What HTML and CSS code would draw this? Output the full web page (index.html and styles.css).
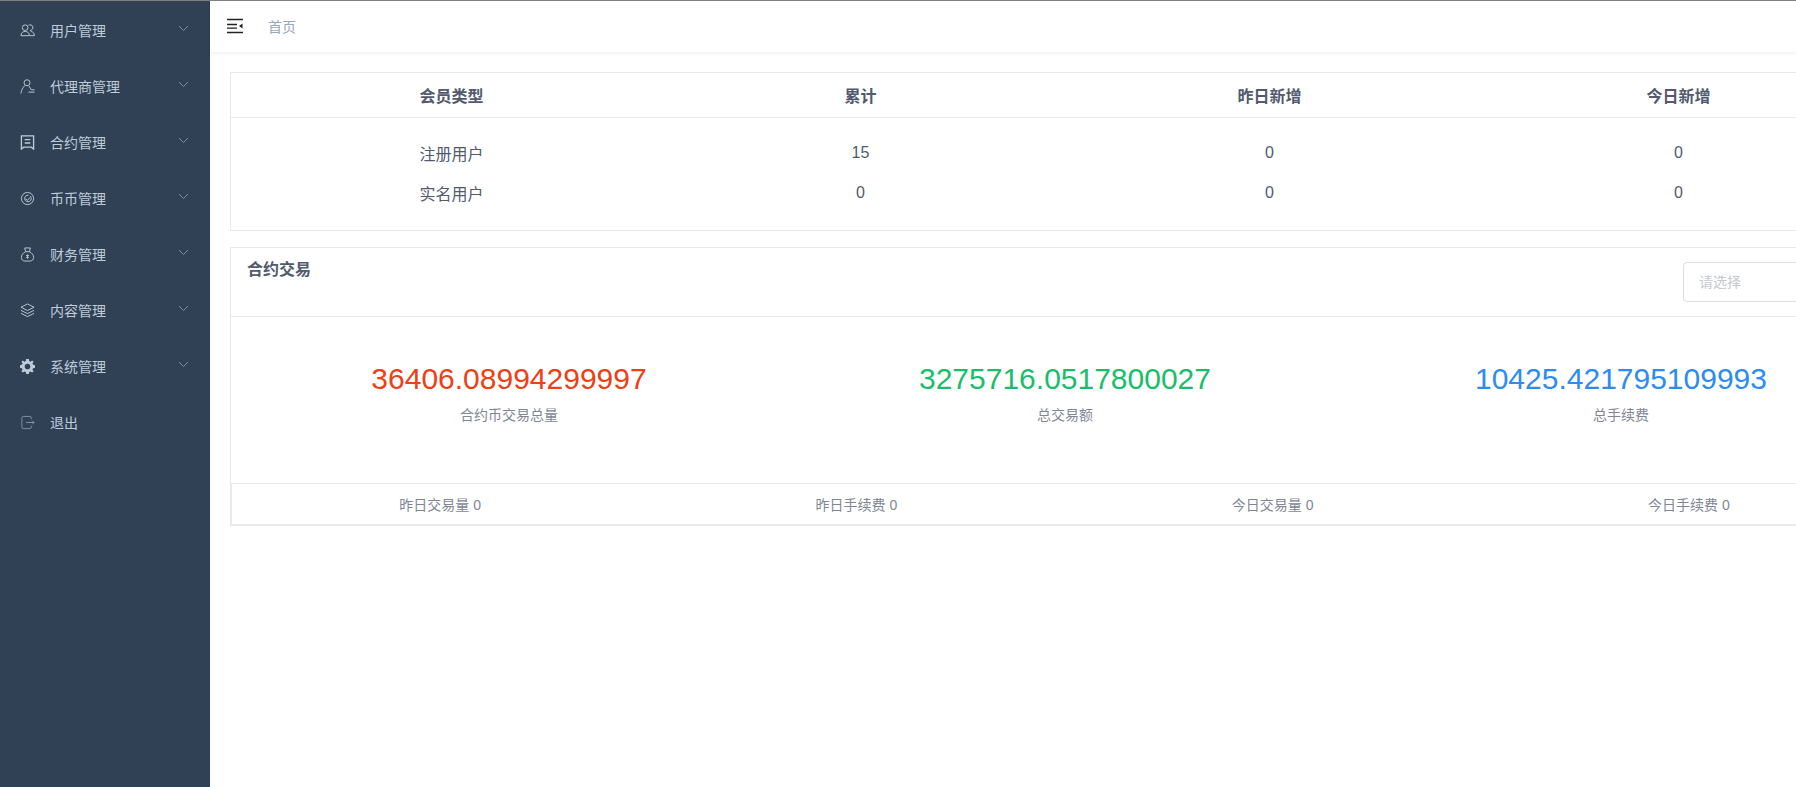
FILE: index.html
```html
<!DOCTYPE html>
<html lang="zh-CN">
<head>
    <meta charset="UTF-8">
    <meta name="viewport" content="width=device-width, initial-scale=1.0">
    <title>首页</title>
    <link rel="stylesheet" href="styles.css">
</head>
<body>
    <div class="app">
        <!-- Sidebar -->
        <aside class="sidebar">
            <ul class="menu">
                <li class="menu-item">
                    <svg class="menu-icon" viewBox="0 0 16 16"><circle cx="5.500" cy="5" r="3"/><path d="M1 13.500c0-3 2-4.500 4.500-4.500S10 10.500 10 13.500z"/><path d="M9 2.500a3 3 0 1 1 1.500 5.400M11.500 9c2.300.3 3.800 1.800 3.800 4.500H10"/></svg>
                    <span>用户管理</span>
                    <svg class="menu-arrow" viewBox="0 0 11 7"><path d="M1 1l4.500 4.500L10 1"/></svg>
                </li>
                <li class="menu-item">
                    <svg class="menu-icon" viewBox="0 0 16 16"><circle cx="7.500" cy="4" r="3.200"/><path d="M1 15.500c.4-3.500 1.800-6 4-8.500M9.500 7.500l2.500 4H15.500M9 14h6.500"/></svg>
                    <span>代理商管理</span>
                    <svg class="menu-arrow" viewBox="0 0 11 7"><path d="M1 1l4.500 4.500L10 1"/></svg>
                </li>
                <li class="menu-item">
                    <svg class="menu-icon menu-icon-bold" viewBox="0 0 16 16"><path d="M1.500 1h13v14L12 13H4l-2.500 2zM5 5h6M5 8.500h6"/></svg>
                    <span>合约管理</span>
                    <svg class="menu-arrow" viewBox="0 0 11 7"><path d="M1 1l4.500 4.500L10 1"/></svg>
                </li>
                <li class="menu-item">
                    <svg class="menu-icon" viewBox="0 0 16 16"><circle cx="8" cy="8" r="6.500"/><path d="M11 5.500a3.500 3.500 0 1 1-2-1M6 8.500l2 1.500 2.500-3"/></svg>
                    <span>币币管理</span>
                    <svg class="menu-arrow" viewBox="0 0 11 7"><path d="M1 1l4.500 4.500L10 1"/></svg>
                </li>
                <li class="menu-item">
                    <svg class="menu-icon" viewBox="0 0 16 16"><path d="M5 1h6L10 5H6zM6 5C3 6.500 1.500 8.500 1.500 11c0 2.500 1.500 4 4 4h5c2.500 0 4-1.500 4-4 0-2.500-1.500-4.500-4.500-6"/><path d="M8 8v4.500M6.500 9h3M6.500 11h3"/></svg>
                    <span>财务管理</span>
                    <svg class="menu-arrow" viewBox="0 0 11 7"><path d="M1 1l4.500 4.500L10 1"/></svg>
                </li>
                <li class="menu-item">
                    <svg class="menu-icon" viewBox="0 0 16 16"><path d="M8 1l7 3.500L8 8 1 4.500zM1 7.800l7 3.500 7-3.500M1 11l7 3.500 7-3.500"/></svg>
                    <span>内容管理</span>
                    <svg class="menu-arrow" viewBox="0 0 11 7"><path d="M1 1l4.500 4.500L10 1"/></svg>
                </li>
                <li class="menu-item">
                    <svg class="menu-icon menu-icon-solid" viewBox="0 0 16 16"><path fill-rule="evenodd" d="M6.600 0h2.800l.4 2.200 1.300.6L13 1.500l1.500 1.500-1.300 1.900.9 1.300 1.900.4v2.800l-1.900.4-.9 1.300 1.300 1.900L13 14.500l-1.900-1.300-1.300.6-.4 2.200H6.600l-.4-2.200-1.300-.6L3 14.500 1.500 13l1.300-1.900-.9-1.300L0 9.400V6.600l1.900-.4.900-1.300L1.500 3 3 1.500l1.900 1.300 1.300-.6zM8 5a3 3 0 1 0 0 6 3 3 0 0 0 0-6z"/></svg>
                    <span>系统管理</span>
                    <svg class="menu-arrow" viewBox="0 0 11 7"><path d="M1 1l4.500 4.500L10 1"/></svg>
                </li>
                <li class="menu-item">
                    <svg class="menu-icon menu-icon-dim" viewBox="0 0 16 16"><path d="M12 4.500V3a1.500 1.500 0 0 0-1.500-1.500h-7A1.500 1.500 0 0 0 2 3v10a1.500 1.500 0 0 0 1.500 1.500h7A1.500 1.500 0 0 0 12 13v-1.500M6.500 8H15M13 6l2 2-2 2"/></svg>
                    <span>退出</span>
                </li>
            </ul>
        </aside>

        <!-- Main Content -->
        <main class="main">
            <header class="navbar">
                <svg class="hamburger" viewBox="0 0 16 16"><path d="M0 .8h16v1.400H0zM0 5.800h10v1.400H0zM0 9.400h10v1.400H0zM0 13.800h16v1.400H0zM15.500 5.500v5l-3.500-2.500z"/></svg>
                <span class="breadcrumb">首页</span>
            </header>

            <div class="content">
                <!-- Member table -->
                <section class="card">
                    <div class="table-row table-head">
                        <div>会员类型</div>
                        <div>累计</div>
                        <div>昨日新增</div>
                        <div>今日新增</div>
                    </div>
                    <div class="table-body">
                        <div class="table-row">
                            <div>注册用户</div>
                            <div>15</div>
                            <div>0</div>
                            <div>0</div>
                        </div>
                        <div class="table-row">
                            <div>实名用户</div>
                            <div>0</div>
                            <div>0</div>
                            <div>0</div>
                        </div>
                    </div>
                </section>

                <!-- Contract trades -->
                <section class="card trade-card">
                    <div class="trade-header">
                        <h2>合约交易</h2>
                        <div class="select-box">请选择</div>
                    </div>
                    <div class="trade-stats">
                        <div class="stat">
                            <div class="stat-value red">36406.08994299997</div>
                            <div class="stat-label">合约币交易总量</div>
                        </div>
                        <div class="stat">
                            <div class="stat-value green">3275716.0517800027</div>
                            <div class="stat-label">总交易额</div>
                        </div>
                        <div class="stat">
                            <div class="stat-value blue">10425.421795109993</div>
                            <div class="stat-label">总手续费</div>
                        </div>
                    </div>
                    <div class="trade-footer">
                        <div>昨日交易量 0</div>
                        <div>昨日手续费 0</div>
                        <div>今日交易量 0</div>
                        <div>今日手续费 0</div>
                    </div>
                </section>
            </div>
        </main>
    </div>
</body>
</html>
```

FILE: styles.css
```css
/* Global Styles */
html, body {
    margin: 0;
    height: 100%;
    overflow: hidden;
}

body {
    font-family: 'Liberation Sans', 'Noto Sans CJK SC', sans-serif;
    font-size: 14px;
    color: #515a6e;
    background-color: #ffffff;
    border-top: 1px solid #808080;
    box-sizing: border-box;
}

.app {
    display: flex;
    height: 100%;
}

/* Sidebar */
.sidebar {
    flex: 0 0 210px;
    background-color: #304156;
}

.menu {
    list-style: none;
    margin: 0;
    padding: 1px 0 0;
}

.menu-item {
    display: flex;
    align-items: center;
    height: 56px;
    padding: 0 20px;
    color: #bfcbd9;
}

.menu-icon {
    flex: none;
    width: 15px;
    height: 15px;
    margin-right: 15px;
    fill: none;
    stroke: #bfcbd9;
    stroke-width: 1;
}

.menu-icon-bold {
    stroke-width: 1.4;
}

.menu-icon-solid {
    fill: #bfcbd9;
    stroke: none;
}

.menu-icon-dim {
    stroke: #8493a6;
}

.menu-item span {
    flex: 1;
}

.menu-arrow {
    width: 11px;
    height: 7px;
    margin: 0 1px 4px 0;
    fill: none;
    stroke: #7f8c9c;
    stroke-width: 1;
}

/* Navbar */
.main {
    flex: 0 0 1586px;
    min-width: 0;
}

.navbar {
    display: flex;
    align-items: center;
    box-sizing: border-box;
    height: 51px;
    padding-bottom: 2px;
    box-shadow: 0 1px 4px rgba(0, 21, 41, 0.08);
}

.hamburger {
    width: 16px;
    height: 16px;
    margin: 0 25px 0 17px;
    fill: #222222;
}

.breadcrumb {
    color: #97a8be;
}

/* Cards */
.content {
    width: 1670px;
    padding: 20px 20px 0;
}

.card {
    border: 1px solid #e8eaec;
    margin-bottom: 16px;
}

/* Member table */
.table-row {
    display: grid;
    grid-template-columns: repeat(4, 1fr);
    padding: 0 16px;
    text-align: center;
}

.table-head {
    height: 44px;
    align-items: center;
    border-bottom: 1px solid #e8eaec;
    font-size: 16px;
    font-weight: bold;
}

.table-body {
    padding: 15px 0 17px;
    font-size: 16px;
}

.table-body .table-row {
    height: 40px;
    align-items: center;
}

/* Contract trades */
.trade-header {
    display: flex;
    justify-content: space-between;
    height: 68px;
    padding-left: 16px;
    border-bottom: 1px solid #e8eaec;
}

.trade-header h2 {
    margin: 8px 0 0;
    font-size: 16px;
}

.select-box {
    box-sizing: border-box;
    width: 216px;
    height: 40px;
    margin: 14px 0 0;
    padding-left: 15px;
    line-height: 38px;
    border: 1px solid #dcdee2;
    border-radius: 4px;
    color: #c5c8ce;
}

.trade-stats {
    display: grid;
    grid-template-columns: repeat(3, 1fr);
    height: 166px;
    text-align: center;
}

.stat-value {
    margin-top: 45px;
    font-size: 30px;
    line-height: 34px;
}

.stat-label {
    margin-top: 9px;
    line-height: 20px;
    color: #808695;
}

.red {
    color: #ed4014;
}

.green {
    color: #19be6b;
}

.blue {
    color: #2d8cf0;
}

.trade-footer {
    display: grid;
    grid-template-columns: repeat(4, 1fr);
    height: 40px;
    padding-right: 2px;
    align-items: center;
    text-align: center;
    border-top: 1px solid #e8eaec;
    border-left: 1px solid #e8eaec;
    border-bottom: 1px solid #e8eaec;
    color: #808695;
}
```
